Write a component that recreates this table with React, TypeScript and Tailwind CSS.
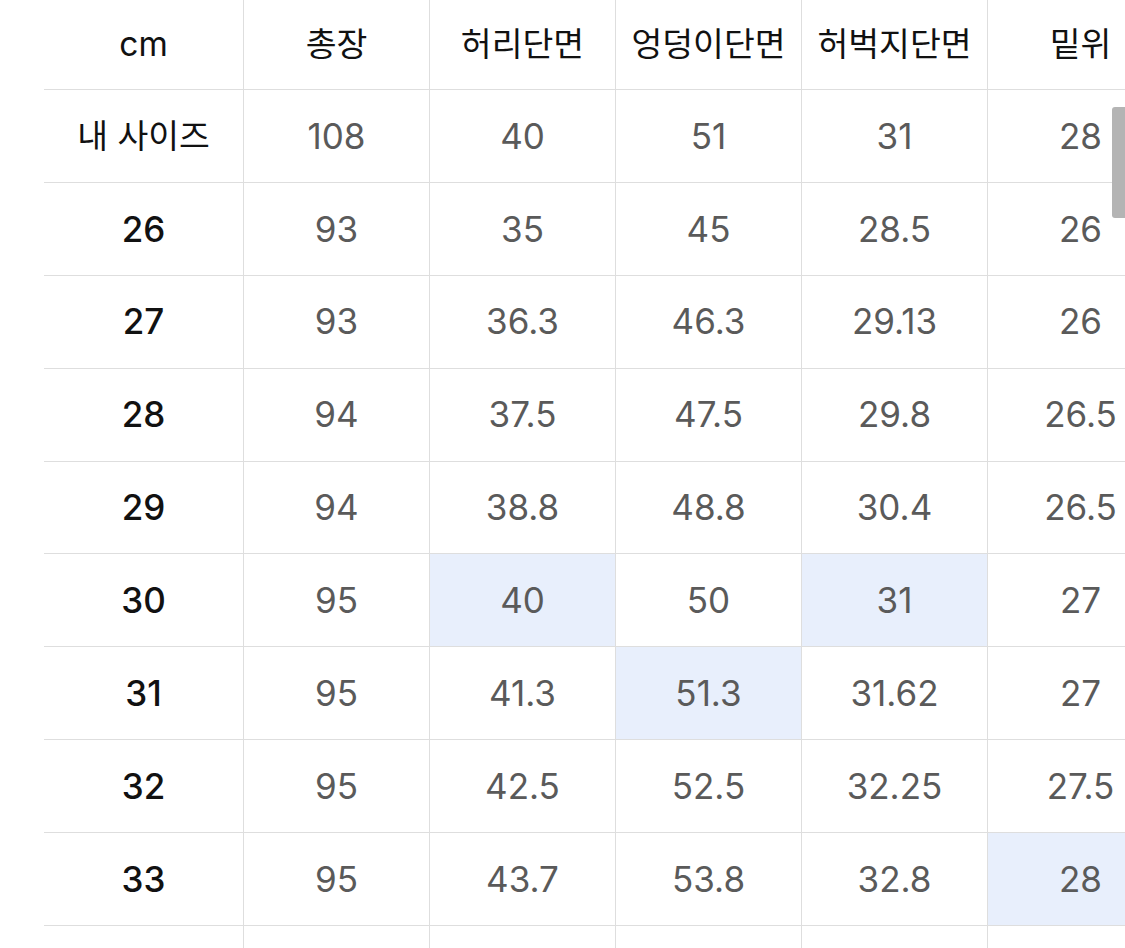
import React from 'react';

const headers = ['cm', '총장', '허리단면', '엉덩이단면', '허벅지단면', '밑위'];

// row label, values, and which value columns are highlighted
const rows: { label: string; values: string[]; hl: number[] }[] = [
  { label: '내 사이즈', values: ['108', '40', '51', '31', '28'], hl: [] },
  { label: '26', values: ['93', '35', '45', '28.5', '26'], hl: [] },
  { label: '27', values: ['93', '36.3', '46.3', '29.13', '26'], hl: [] },
  { label: '28', values: ['94', '37.5', '47.5', '29.8', '26.5'], hl: [] },
  { label: '29', values: ['94', '38.8', '48.8', '30.4', '26.5'], hl: [] },
  { label: '30', values: ['95', '40', '50', '31', '27'], hl: [1, 3] },
  { label: '31', values: ['95', '41.3', '51.3', '31.62', '27'], hl: [2] },
  { label: '32', values: ['95', '42.5', '52.5', '32.25', '27.5'], hl: [] },
  { label: '33', values: ['95', '43.7', '53.8', '32.8', '28'], hl: [4] },
  { label: '', values: ['', '', '', '', ''], hl: [] },
];

const font = { fontFamily: 'Inter, "Noto Sans CJK KR", sans-serif' };

export default function App() {
  return (
    <div className="relative w-[1125px] h-[948px] overflow-hidden bg-white" style={font}>
      <div className="ml-[44px] w-[1129px] grid grid-cols-[199px_repeat(5,186px)]">
        {headers.map((h, i) => (
          <div
            key={h}
            className={`h-[90px] flex items-center justify-center border-b border-[#dedede] text-[33.5px] text-[#111] ${i > 0 ? 'border-l' : ''}`}
          >
            {h}
          </div>
        ))}
        {rows.map((r, ri) => (
          <React.Fragment key={ri}>
            <div
              className={`h-[92.9px] flex items-center justify-center border-b border-[#dedede] text-[#111] ${ri === 0 ? 'text-[33.5px]' : 'text-[35px] font-medium'}`}
            >
              {r.label}
            </div>
            {r.values.map((v, vi) => (
              <div
                key={vi}
                className={`h-[92.9px] flex items-center justify-center border-b border-l border-[#dedede] text-[35px] text-[#5a5a5a] ${r.hl.includes(vi) ? 'bg-[#e8effc]' : ''}`}
              >
                {v}
              </div>
            ))}
          </React.Fragment>
        ))}
      </div>
      {/* scrollbar thumb */}
      <div className="absolute left-[1112px] top-[107px] w-[16px] h-[111px] rounded-[3px] bg-[#b4b4b4]" />
    </div>
  );
}
